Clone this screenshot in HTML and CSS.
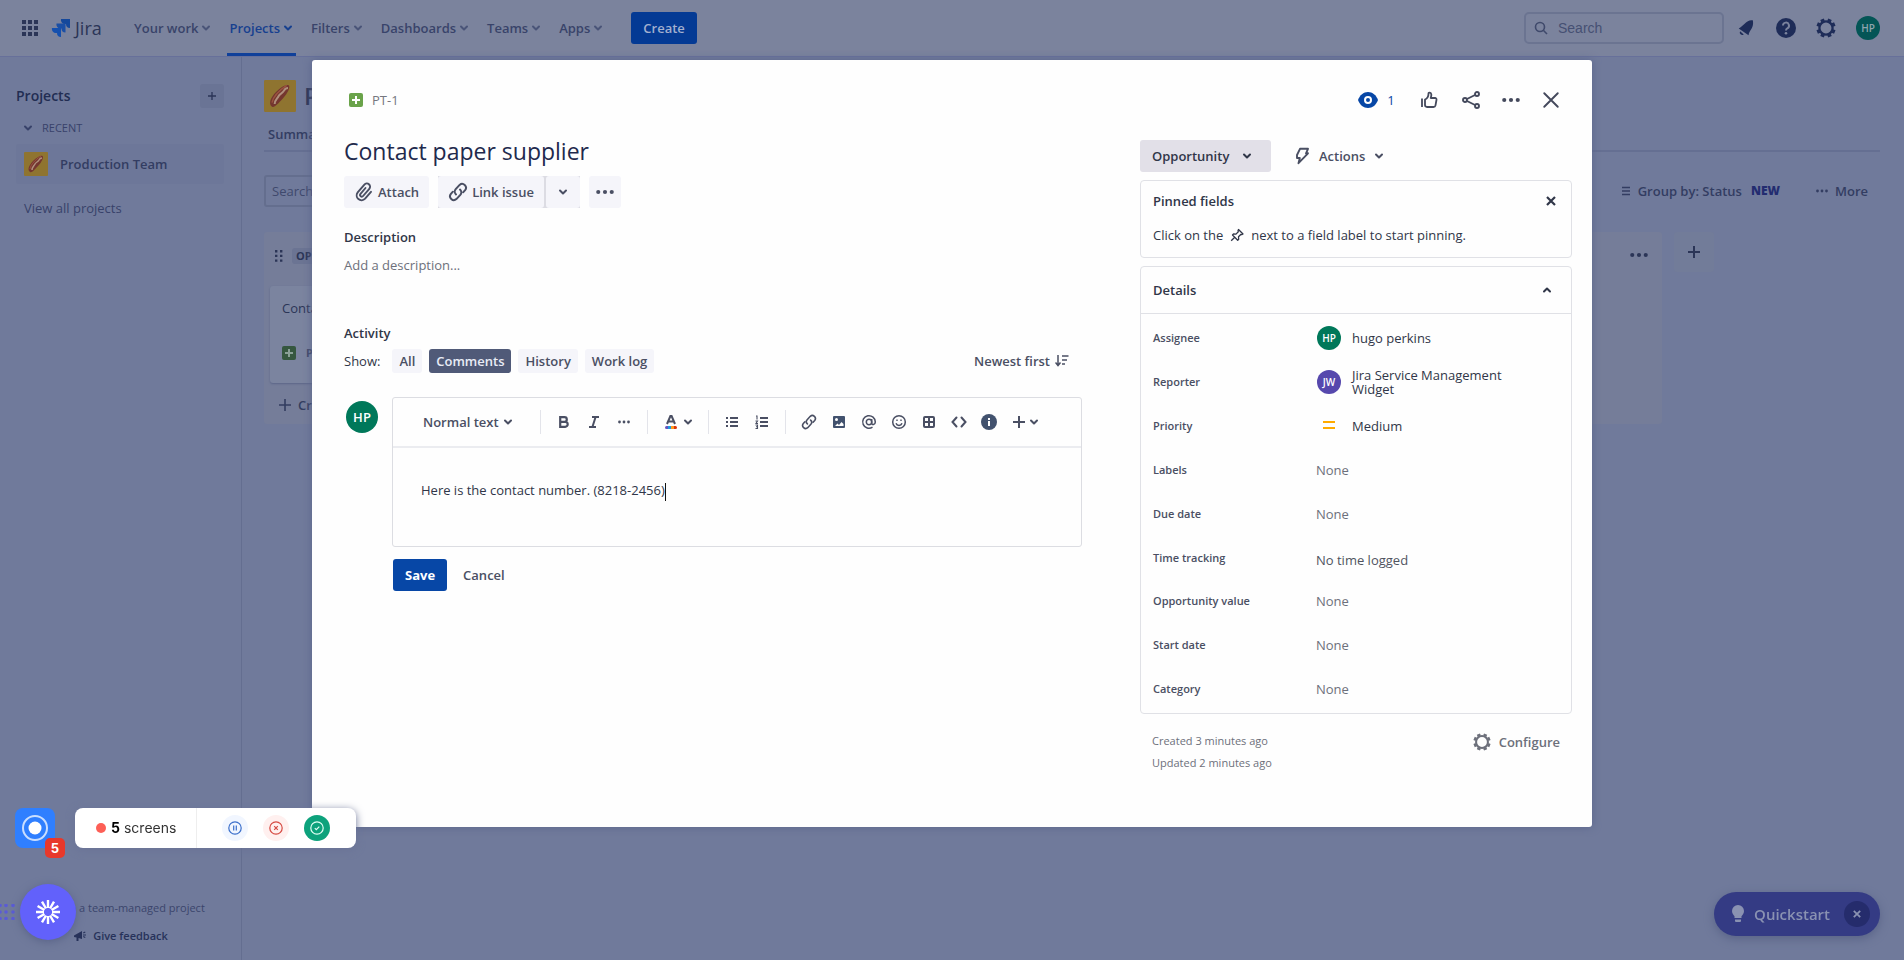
FILE: index.html
```
<!DOCTYPE html>
<html lang="en">
<head>
<meta charset="utf-8">
<title>Jira - Contact paper supplier</title>
<link rel="stylesheet" href="styles.css">
</head>
<body>
<svg class="sprite" aria-hidden="true">
  <symbol id="chev" viewBox="0 0 12 12"><path d="M3 4.500 6 7.500 9 4.500" fill="none" stroke="currentColor" stroke-width="2" stroke-linecap="round" stroke-linejoin="round"/></symbol>
  <symbol id="dots" viewBox="0 0 20 20"><g fill="currentColor"><circle cx="2.500" cy="10" r="2.300"/><circle cx="10" cy="10" r="2.300"/><circle cx="17.500" cy="10" r="2.300"/></g></symbol>
  <symbol id="plus" viewBox="0 0 12 12"><path d="M6 0v12M0 6h12" stroke="currentColor" stroke-width="2"/></symbol>
  <symbol id="cross" viewBox="0 0 16 16"><path d="M2 2 14 14M14 2 2 14" stroke="currentColor" stroke-width="1.700" stroke-linecap="round"/></symbol>
  <symbol id="crossbold" viewBox="0 0 10 10"><path d="M1 1 9 9M9 1 1 9" stroke="currentColor" stroke-width="2.200"/></symbol>
  <symbol id="story" viewBox="0 0 14 14"><rect width="14" height="14" rx="2" fill="currentColor"/><path d="M7 3v8M3 7h8" stroke="var(--plus, #fff)" stroke-width="2"/></symbol>
  <symbol id="gear" viewBox="0 0 20 20"><circle cx="10" cy="10" r="6.600" fill="none" stroke="currentColor" stroke-width="2.300"/><g stroke="currentColor" stroke-width="3.800"><path d="M7 3.600 6 1.200M13 3.600 14 1.200M16.400 7 18.800 6M16.400 13 18.800 14M13 16.400 14 18.800M7 16.400 6 18.800M3.600 13 1.200 14M3.600 7 1.200 6"/></g></symbol>
  <symbol id="link" viewBox="0 0 20 20"><g fill="none" stroke="currentColor" stroke-width="2" stroke-linecap="round"><path d="M8 12.400a3.800 3.800 0 0 1-.3-5.300l3.900-4.200a3.800 3.800 0 0 1 5.500 5.200l-2 2.200"/><path d="M12 7.600a3.800 3.800 0 0 1 .3 5.300l-3.900 4.200a3.800 3.800 0 0 1-5.500-5.200l2-2.200"/></g></symbol>
  <symbol id="hotdog" viewBox="0 0 24 24"><rect width="24" height="24" rx="1" fill="#8f7430"/><path d="M6 20C3 18 5 13 9 9s8-6 9.500-5-.5 6-4.500 10-6 7-8 6z" fill="#74362f"/><path d="M8 18c0-3 2-4 3-6s3-2 4-4 2-2 3-2" fill="none" stroke="#b08f7c" stroke-width="1.500"/><path d="M6 17c1-5 5-9 11-13" fill="none" stroke="#9b5440" stroke-width="1"/></symbol>
</svg>

<header class="topnav">
  <button class="plain" aria-label="Switch to"><svg class="i16" viewBox="0 0 16 16" fill="currentColor"><path d="M0 0h4v4H0zM6 0h4v4H6zM12 0h4v4h-4zM0 6h4v4H0zM6 6h4v4H6zM12 6h4v4h-4zM0 12h4v4H0zM6 12h4v4H6zM12 12h4v4h-4z"/></svg></button>
  <a class="brand" href="#"><svg class="i20" viewBox="0 0 20 20"><path d="M10 1h9v9a4 4 0 0 1-4-4h-1a4 4 0 0 1-4-5z" fill="#15489b"/><path d="M5.500 5.500h9v9a4 4 0 0 1-4-4h-1a4 4 0 0 1-4-5z" fill="#1b4fa5"/><path d="M1 10h9v9a4 4 0 0 1-4-4H5a4 4 0 0 1-4-5z" fill="#1550ae"/></svg><span>Jira</span></a>
  <nav class="menu">
    <a href="#">Your work<svg><use href="#chev"/></svg></a>
    <a href="#" class="active">Projects<svg><use href="#chev"/></svg></a>
    <a href="#">Filters<svg><use href="#chev"/></svg></a>
    <a href="#">Dashboards<svg><use href="#chev"/></svg></a>
    <a href="#">Teams<svg><use href="#chev"/></svg></a>
    <a href="#">Apps<svg><use href="#chev"/></svg></a>
  </nav>
  <button class="create">Create</button>
  <label class="navsearch"><svg class="i14" viewBox="0 0 14 14" fill="none" stroke="currentColor" stroke-width="1.600"><circle cx="6" cy="6" r="4.500"/><path d="m9.300 9.300 3.700 3.700"/></svg><input type="search" placeholder="Search" aria-label="Search"></label>
  <div class="tools">
    <button class="plain" aria-label="Notifications"><svg class="i20" viewBox="-1 -1 22 22" fill="currentColor"><path d="M2 10.500C5 9 7 6.500 10 4c3-2.300 5-2.500 7.500-2.500C18 4 18 7 16.500 10c-1.500 3-3.500 4.500-3.700 8z"/><path d="M3.500 13.500 7.500 17.200a2.800 2.800 0 0 1-4-3.700z"/></svg></button>
    <button class="plain" aria-label="Help"><svg class="i20" viewBox="0 0 20 20"><circle cx="10" cy="10" r="10" fill="currentColor"/><path d="M7 7.600a3 3 0 1 1 4.300 2.700c-1 .5-1.300 1-1.300 2.200" fill="none" stroke="#7b839d" stroke-width="2"/><circle cx="10" cy="15.300" r="1.300" fill="#7b839d"/></svg></button>
    <button class="plain" aria-label="Settings"><svg class="i20"><use href="#gear"/></svg></button>
    <button class="avatar dim" aria-label="Profile">HP</button>
  </div>
</header>

<div class="shell">
  <aside class="side">
    <div class="sidehead"><h2>Projects</h2><button aria-label="Create project"><svg class="i8"><use href="#plus"/></svg></button></div>
    <button class="recent"><svg class="i12"><use href="#chev"/></svg>RECENT</button>
    <a class="proj" href="#"><svg class="i24"><use href="#hotdog"/></svg>Production Team</a>
    <a class="all" href="#">View all projects</a>
    <div class="sidefoot">
      <p>You're in a team-managed project</p>
      <button><svg class="i12" viewBox="0 0 12 12" fill="currentColor"><path d="M0 5.500 8 1v8L4.500 8v3h-2V7.500L0 7zM9 4.500h3v1H9zM9 2.500l2-1 .5 1-2 1zM9 7l.5-1 2 1-.5 1z"/></svg>Give feedback</button>
    </div>
  </aside>

  <main class="board">
    <div class="boardtitle"><svg class="i32"><use href="#hotdog"/></svg><h1>Production Team</h1></div>
    <div class="tabs"><a href="#">Summary</a></div>
    <div class="filters">
      <input type="search" placeholder="Search board" aria-label="Search board">
      <button><svg class="i10" viewBox="0 0 10 10" stroke="currentColor" stroke-width="1.400"><path d="M1 1.500h8M1 5h8M1 8.500h8"/></svg>Group by: Status<b>NEW</b></button>
      <button><svg class="i12"><use href="#dots"/></svg>More</button>
    </div>
    <div class="cols">
      <section class="col">
        <div class="colhead"><svg class="grip" viewBox="0 0 8 12" fill="currentColor"><path d="M0 0h2.400v2.400H0zM5 0h2.400v2.400H5zM0 4.700h2.400v2.400H0zM5 4.700h2.400v2.400H5zM0 9.400h2.400v2.400H0zM5 9.400h2.400v2.400H5z"/></svg><span>OPPORTUNITY</span></div>
        <article class="card"><p>Contact paper supplier</p><div><svg class="i14"><use href="#story"/></svg><b>PT-1</b></div></article>
        <button class="add"><svg class="i12" viewBox="0 0 12 12"><path d="M6 0v12M0 6h12" stroke="currentColor" stroke-width="1.600"/></svg>Create issue</button>
      </section>
      <section class="col"></section>
      <section class="col"></section>
      <section class="col"></section>
      <section class="col last"><button class="plain" aria-label="Column actions"><svg class="i18"><use href="#dots"/></svg></button></section>
      <button class="addcol" aria-label="Add column"><svg class="i12"><use href="#plus"/></svg></button>
    </div>
  </main>
</div>

<button class="quick"><svg viewBox="0 0 14 18" fill="currentColor"><path d="M7 0a6 6 0 0 1 6 6c0 2.500-1.500 3.800-2.500 5.300V13h-7v-1.700C2.500 9.800 1 8.500 1 6a6 6 0 0 1 6-6zM4 14.500h6V16a1 1 0 0 1-1 1H5a1 1 0 0 1-1-1z"/></svg>Quickstart<span><svg class="i8"><use href="#crossbold"/></svg></span></button>

<div class="modal" role="dialog" aria-label="Contact paper supplier">
  <header class="mhead">
    <a href="#" class="key"><svg class="i14"><use href="#story"/></svg>PT-1</a>
    <div class="acts">
      <button class="watch"><svg class="i20" viewBox="0 0 20 20"><path d="M0 10c1.800-5 5.500-8 10-8s8.200 3 10 8c-1.800 5-5.500 8-10 8S1.800 15 0 10z" fill="currentColor"/><circle cx="10" cy="10" r="3" fill="none" stroke="#fff" stroke-width="2"/></svg>1</button>
      <button class="vote" aria-label="Vote"><svg class="i18" viewBox="0 0 18 18" fill="none" stroke="currentColor" stroke-width="1.800" stroke-linejoin="round"><path d="M2 7.500V16"/><path d="M5 8.500c2.500-1 3.500-3.500 3.500-6 0-1.200 2.500-1.200 2.800.8.200 1.500-.3 2.500-.6 3.700H15c1 0 1.700.8 1.500 1.800l-1 5.500c-.2 1-.9 1.700-2 1.700H7c-1.300 0-2-.7-2-2z"/></svg></button>
      <button aria-label="Share"><svg class="i18" viewBox="0 0 18 18" fill="none" stroke="currentColor" stroke-width="1.900"><circle cx="3" cy="9" r="2"/><circle cx="15" cy="3" r="2"/><circle cx="15" cy="15" r="2"/><path d="m5 8 8-4M5 10l8 4"/></svg></button>
      <button aria-label="Actions"><svg class="i18"><use href="#dots"/></svg></button>
      <button aria-label="Close"><svg class="i18"><use href="#cross"/></svg></button>
    </div>
  </header>

  <div class="mbody">
    <div class="content">
      <h1>Contact paper supplier</h1>
      <div class="btns">
        <button><svg class="i20" viewBox="0 0 20 20" fill="none" stroke="currentColor" stroke-width="1.900" stroke-linecap="round"><path d="m11.500 6-5 5.800a1.700 1.700 0 0 0 2.600 2.200l6.200-7.200a3.200 3.200 0 0 0-4.900-4.200L3.700 10.300a4.900 4.900 0 0 0 7.400 6.400l5.900-6.900"/></svg>Attach</button>
        <div class="split"><button><svg class="i20"><use href="#link"/></svg>Link issue</button><button aria-label="More link options"><svg class="i12"><use href="#chev"/></svg></button></div>
        <button class="square" aria-label="More"><svg class="i18"><use href="#dots"/></svg></button>
      </div>
      <h2>Description</h2>
      <p class="placeholder">Add a description...</p>
      <h2 class="activity">Activity</h2>
      <div class="show">
        <span>Show:</span>
        <button>All</button><button class="on">Comments</button><button>History</button><button>Work log</button>
        <button class="sort">Newest first<svg class="i14" viewBox="0 0 14 14" fill="none" stroke="currentColor" stroke-width="1.500"><path d="M3 1v10M.5 8.500 3 11.500l2.500-3M7 2h6.500M7 6h5M7 10h3"/></svg></button>
      </div>
      <div class="comment">
        <span class="avatar big">HP</span>
        <div>
          <div class="editor">
            <div class="toolbar">
              <label class="pick style"><select aria-label="Text style"><option>Normal text</option></select><svg class="i12"><use href="#chev"/></svg></label>
              <i></i>
              <button aria-label="Bold"><svg class="i16" viewBox="0 0 16 16" fill="none" stroke="currentColor" stroke-width="2.200"><path d="M4.200 3.200h4.300a2.300 2.300 0 0 1 0 4.600H4.200zM4.200 7.800h5a2.500 2.500 0 0 1 0 5h-5z"/></svg></button>
              <button aria-label="Italic"><svg class="i16" viewBox="0 0 16 16" fill="none" stroke="currentColor" stroke-width="2"><path d="M6 3h7M3 13h7M9.600 3 6.400 13"/></svg></button>
              <button aria-label="More formatting"><svg class="i12"><use href="#dots"/></svg></button>
              <i></i>
              <button aria-label="Text color" class="wide"><svg class="i16" viewBox="0 0 16 16"><path d="M4 10 7.400 2h1.200L12 10M5.500 7.500h5" fill="none" stroke="currentColor" stroke-width="2"/><path d="M3.500 12H5v3H3.500a1.500 1.500 0 0 1 0-3z" fill="#6554c0"/><path d="M5 12h3v3H5z" fill="#1d9ce0"/><path d="M8 12h3v3H8z" fill="#ff991f"/><path d="M11 12h1.500a1.500 1.500 0 0 1 0 3H11z" fill="#de350b"/></svg><svg class="i12"><use href="#chev"/></svg></button>
              <i></i>
              <button aria-label="Bullet list"><svg class="i16" viewBox="0 0 16 16" stroke="currentColor" stroke-width="2"><path d="M2 4h2M2 8h2M2 12h2M6 4h8M6 8h8M6 12h8"/></svg></button>
              <button aria-label="Numbered list"><svg class="i16" viewBox="0 0 16 16" fill="none" stroke="currentColor"><path stroke-width="2" d="M6 4h8M6 8h8M6 12h8"/><path d="M2 2h1v3.500M1.500 7h2L2 9.500h2M1.500 11h2v3.500h-2M2 12.700h1.500" stroke-width="1.100"/></svg></button>
              <i></i>
              <button aria-label="Link"><svg class="i16"><use href="#link"/></svg></button>
              <button aria-label="Image"><svg class="i16" viewBox="0 0 16 16"><rect x="2" y="2" width="12" height="12" rx="1" fill="#42526e"/><circle cx="5.500" cy="5.500" r="1.500" fill="#fff"/><path d="m4 12 2.500-2.500L8 11l2.500-3L12.500 10v2z" fill="#fff"/></svg></button>
              <button aria-label="Mention"><svg class="i16" viewBox="0 0 16 16" fill="none" stroke="currentColor" stroke-width="1.500"><circle cx="8" cy="8" r="2.700"/><path d="M10.700 5v4.200c0 2.200 3.600 1.800 3.600-1.200a6.300 6.300 0 1 0-2.800 5.200"/></svg></button>
              <button aria-label="Emoji"><svg class="i16" viewBox="0 0 16 16" fill="none" stroke="currentColor" stroke-width="1.500"><circle cx="8" cy="8" r="6.300"/><path d="M5 9.300a3.200 3.200 0 0 0 6 0M5.300 6.200h1.400M9.300 6.200h1.400"/></svg></button>
              <button aria-label="Table"><svg class="i16" viewBox="0 0 16 16" fill="none" stroke="currentColor" stroke-width="2"><rect x="3" y="3" width="10" height="10" rx="1"/><path d="M8 3v10M3 8h10"/></svg></button>
              <button aria-label="Code"><svg class="i16" viewBox="0 0 16 16" fill="none" stroke="currentColor" stroke-width="2" stroke-linecap="round"><path d="M5.500 3.500 1.500 8l4 4.500M10.500 3.500l4 4.500-4 4.500"/></svg></button>
              <button aria-label="Info panel"><svg class="i16" viewBox="0 0 16 16"><circle cx="8" cy="8" r="8" fill="#42526e"/><path d="M7 7h2v5H7zM7 4h2v2H7z" fill="#fff"/></svg></button>
              <button aria-label="Insert" class="wide"><svg class="i12"><use href="#plus"/></svg><svg class="i12"><use href="#chev"/></svg></button>
            </div>
            <div class="text" role="textbox" aria-label="Comment" contenteditable="true">Here is the contact number. (8218-2456)<span class="caret"></span></div>
          </div>
          <div class="submit"><button class="save">Save</button><button>Cancel</button></div>
        </div>
      </div>
    </div>

    <div class="info">
      <div class="status">
        <label class="pick state"><select aria-label="Status"><option>Opportunity</option></select><svg class="i12"><use href="#chev"/></svg></label>
        <button><svg class="i18" viewBox="0 0 18 18" fill="none" stroke="currentColor" stroke-width="1.900" stroke-linejoin="round"><path d="M7 1.800h8L13 6.300h2L5.500 16.200 6.800 11H4V8z"/></svg>Actions<svg class="i12"><use href="#chev"/></svg></button>
      </div>
      <section class="box pinned">
        <div><h2>Pinned fields</h2><button aria-label="Dismiss"><svg class="i10"><use href="#crossbold"/></svg></button></div>
        <p>Click on the <svg class="i14" viewBox="0 0 14 14" fill="none" stroke="currentColor" stroke-width="1.300" stroke-linejoin="round"><path d="m8.500 1.500 4.500 4.500-1.300.7-.9-.2-2.300 2.300.2 2.400-1 1-5.200-5.200 1-1 2.500.1 2.300-2.300-.3-1.100zM5 9l-3.800 3.800"/></svg> next to a field label to start pinning.</p>
      </section>
      <section class="box details">
        <div><h2>Details</h2><button aria-label="Collapse"><svg class="i12 up"><use href="#chev"/></svg></button></div>
        <dl>
          <dt>Assignee</dt><dd class="who"><span class="avatar">HP</span>hugo perkins</dd>
          <dt>Reporter</dt><dd class="who"><span class="avatar jw">JW</span>Jira Service Management Widget</dd>
          <dt>Priority</dt><dd class="who"><svg class="i24" viewBox="0 0 24 24" stroke="#ffab00" stroke-width="2"><path d="M6 8h12M6 14h12"/></svg>Medium</dd>
          <dt>Labels</dt><dd class="none">None</dd>
          <dt>Due date</dt><dd class="none">None</dd>
          <dt>Time tracking</dt><dd class="time">No time logged</dd>
          <dt>Opportunity value</dt><dd class="none">None</dd>
          <dt>Start date</dt><dd class="none">None</dd>
          <dt>Category</dt><dd class="none">None</dd>
        </dl>
      </section>
      <footer>
        <div><p>Created 3 minutes ago</p><p>Updated 2 minutes ago</p></div>
        <button><svg class="i18"><use href="#gear"/></svg>Configure</button>
      </footer>
    </div>
  </div>
</div>

<button class="rec" aria-label="Recorder"><svg viewBox="0 0 40 40"><rect width="40" height="40" rx="8" fill="#2f7fff"/><circle cx="20" cy="20" r="12" fill="none" stroke="#c9deff" stroke-width="2"/><circle cx="20" cy="20" r="6.500" fill="#fff"/></svg><b>5</b></button>
<div class="recbar">
  <div class="count"><i></i><b>5</b>screens</div>
  <div class="controls">
    <button class="pause" aria-label="Pause"><svg class="i14" viewBox="0 0 14 14" fill="none" stroke="currentColor" stroke-width="1.200"><circle cx="7" cy="7" r="6.200"/><path d="M5.700 4.500v5M8.300 4.500v5"/></svg></button>
    <button class="stop" aria-label="Discard"><svg class="i14" viewBox="0 0 14 14" fill="none" stroke="currentColor" stroke-width="1.200"><circle cx="7" cy="7" r="6.200"/><path d="m5.200 5.200 3.600 3.600M8.800 5.200 5.200 8.800"/></svg></button>
    <button class="done" aria-label="Finish"><svg class="i14" viewBox="0 0 14 14" fill="none" stroke="currentColor" stroke-width="1.200"><circle cx="7" cy="7" r="6.200"/><path d="m4.800 7.200 1.500 1.500 3-3"/></svg></button>
  </div>
</div>
<div class="helper">
  <svg class="handle" viewBox="0 0 16 16" fill="#5a5bd6"><circle cx="0" cy="1.500" r="1.800"/><circle cx="6" cy="1.500" r="1.800"/><circle cx="13" cy="1.500" r="1.800"/><circle cx="0" cy="8" r="1.800"/><circle cx="6" cy="8" r="1.800"/><circle cx="13" cy="8" r="1.800"/><circle cx="0" cy="14.500" r="1.800"/><circle cx="6" cy="14.500" r="1.800"/><circle cx="13" cy="14.500" r="1.800"/></svg>
  <button aria-label="Assistant"><svg class="i24" viewBox="0 0 24 24" stroke="#fff" stroke-width="2.400"><path d="M12 0v8M12 16v8M0 12h8M16 12h8M6 1.600l4 6.900M14 15.500l4 6.900M18 1.600l-4 6.900M10 15.500l-4 6.900M1.600 6l6.900 4M15.500 14l6.900 4M1.600 18l6.900-4M15.500 10l6.900-4"/></svg></button>
</div>
</body>
</html>
```
FILE: styles.css
```
* { box-sizing: border-box; }
body {
  margin: 0;
  min-height: 100vh;
  display: flex;
  flex-direction: column;
  overflow: hidden;
  background: #707a9b;
  color: #2b3557;
  font: 13px/20px "Open Sans", "Noto Sans", sans-serif;
}
h1, h2, p, dl, dd { margin: 0; }
h2 { font-size: 13px; line-height: 20px; font-weight: 600; }
a { color: inherit; text-decoration: none; }
button, input, select { font: inherit; color: inherit; border: 0; margin: 0; padding: 0; background: none; }
button { display: flex; align-items: center; justify-content: center; font-weight: 600; }
svg { display: block; flex: none; }
.sprite { display: none; }
.i8 { width: 8px; height: 8px; }
.i10 { width: 10px; height: 10px; }
.i12 { width: 12px; height: 12px; }
.i14 { width: 14px; height: 14px; }
.i16 { width: 16px; height: 16px; }
.i18 { width: 18px; height: 18px; }
.i20 { width: 20px; height: 20px; }
.i24 { width: 24px; height: 24px; }
.i32 { width: 32px; height: 32px; }
.avatar {
  display: inline-flex; align-items: center; justify-content: center; flex: none;
  width: 24px; height: 24px; border-radius: 50%;
  background: #00785a; color: #fff; font-size: 10px; font-weight: 600;
}
.avatar.dim { background: #045556; color: #8fa5ae; }
.avatar.big { width: 32px; height: 32px; font-size: 13px; }
.avatar.jw { background: #5648ad; }

/* top navigation */
.topnav {
  display: flex; align-items: center;
  height: 57px; padding: 0 24px 0 22px;
  background: #7b839d; border-bottom: 1px solid #67709a;
}
.brand { display: flex; align-items: center; gap: 4px; margin-left: 13px; font-size: 18px; width: 81px; }
.menu { display: flex; align-self: stretch; gap: 13px; }
.menu a { display: flex; align-items: center; gap: 2px; padding: 3px 2px 0; border-bottom: 3px solid transparent; font-weight: 600; color: #39436a; }
.menu svg { width: 12px; height: 12px; color: #4a5478; }
.menu .active { color: #17408f; border-color: #10409a; }
.menu .active svg { color: #17408f; }
.create { margin-left: 25px; height: 32px; padding: 0 12px; border-radius: 3px; background: #043a94; color: #a3b0cf; }
.navsearch {
  display: flex; align-items: center; gap: 10px;
  width: 200px; height: 32px; margin-left: auto; padding: 0 8px;
  border: 2px solid #6b7491; border-radius: 5px; color: #3f496b;
}
.navsearch input { width: 100%; font: 14px "Liberation Sans", sans-serif; outline: 0; }
.navsearch input::placeholder { color: #465073; opacity: 1; }
.tools { display: flex; align-items: center; gap: 20px; margin-left: 12px; color: #1e2c58; }

/* sidebar */
.shell { display: flex; flex: 1; }
.side { display: flex; flex-direction: column; width: 242px; padding: 27px 17px 14px 16px; border-right: 1px solid #646e90; }
.sidehead { display: flex; align-items: center; justify-content: space-between; }
.sidehead h2 { font-size: 14px; line-height: 24px; color: #222d53; }
.sidehead button { width: 24px; height: 24px; background: #6a7495; border-radius: 3px; }
.recent { justify-content: flex-start; gap: 8px; margin-top: 10px; padding-left: 6px; font-size: 11px; font-weight: 500; line-height: 20px; color: #38426a; }
.proj { display: flex; align-items: center; gap: 12px; height: 40px; margin-top: 6px; padding-left: 8px; background: #6d7799; border-radius: 3px; font-weight: 600; color: #333d62; }
.all { margin: 14px 8px; color: #38426a; }
.sidefoot { margin-top: auto; padding-right: 4px; text-align: center; font-size: 11px; color: #3b456c; }
.sidefoot button { width: 100%; gap: 7px; margin-top: 8px; padding-left: 6px; color: #27325a; }

/* board behind the dialog */
.board { flex: 1; padding: 23px 24px 0 22px; }
.boardtitle { display: flex; align-items: center; gap: 8px; }
.boardtitle h1 { font-size: 24px; line-height: 32px; font-weight: 600; }
.tabs { height: 40px; padding: 12px 4px 0; border-bottom: 2px solid #656f92; font-weight: 600; color: #333d62; }
.filters { display: flex; align-items: center; gap: 36px; margin-top: 23px; padding-right: 12px; color: #333d62; }
.filters input { width: 160px; height: 32px; padding: 0 6px; margin-right: auto; border: 2px solid #646e8e; border-radius: 3px; }
.filters input::placeholder { color: #3f496d; opacity: 1; }
.filters button { gap: 7px; }
.filters b { margin-left: 2px; font-size: 12px; color: #232c70; }
.cols { display: flex; gap: 12px; align-items: flex-start; margin-top: 25px; }
.col { flex: 0 1 270px; height: 192px; background: #757d99; padding: 6px; border-radius: 3px; }
.col.last { display: flex; justify-content: flex-end; align-items: flex-start; padding: 14px; }
.addcol { width: 40px; height: 40px; background: #727c99; border-radius: 3px; }
.colhead { display: flex; align-items: center; gap: 9px; height: 36px; padding-left: 5px; }
.grip { width: 8px; height: 12px; }
.colhead span { padding: 0 4px; background: #6b7493; font-size: 11px; line-height: 16px; font-weight: 700; border-radius: 3px; }
.card { margin-top: 12px; height: 97px; padding: 12px; background: #7b849f; border-radius: 3px; box-shadow: 0 1px 2px #5b6588; }
.card div { display: flex; align-items: center; gap: 10px; margin-top: 25px; color: #35573f; --plus: #8aa097; }
.card b { font-size: 11px; color: #3f4969; }
.add { gap: 7px; padding: 12px 9px; color: #333d60; }

.quick {
  position: fixed; right: 24px; bottom: 24px; height: 44px; padding: 0 10px 0 17px; gap: 9px;
  border-radius: 22px; background: #343b84; color: #8a92b2; font-size: 15px; box-shadow: 0 3px 10px #5a6488;
}
.quick > svg { width: 14px; height: 18px; }
.quick span { display: flex; align-items: center; justify-content: center; width: 26px; height: 26px; margin-left: 5px; border-radius: 50%; background: #252c6c; }

/* issue dialog */
.modal {
  position: absolute; top: 60px; left: 50%; margin-left: -640px; width: 1280px; min-height: 767px;
  padding: 24px 20px 40px 32px; background: #fefefe; border-radius: 3px; box-shadow: 0 0 8px #5b658c; color: #303648;
}
.mhead { display: flex; align-items: center; justify-content: space-between; height: 32px; padding-left: 5px; color: #44495c; }
.key { display: flex; align-items: center; gap: 9px; color: #75777f; }
.key svg { color: #6aa34a; }
.acts { display: flex; gap: 8px; padding-right: 5px; }
.acts button { width: 32px; height: 32px; }
.acts .watch { width: 51px; gap: 9px; color: #0747a6; font-weight: 400; margin-right: 3px; }
.acts .vote { margin-right: 2px; }
.mbody { display: grid; grid-template-columns: minmax(0, 1fr) 432px; gap: 58px; margin-top: 24px; }
.content h1 { margin-top: -5px; font-size: 23px; line-height: 32px; font-weight: 500; color: #1f2a4d; }
.btns { display: flex; gap: 9px; margin-top: 9px; color: #4a4f63; }
.btns button { height: 32px; padding: 0 10px; gap: 4px; background: #f5f5fa; border-radius: 3px; }
.btns .square { width: 32px; padding: 0; }
.split { display: flex; gap: 2px; background: #dcdce3; }
.split button:last-child { padding: 0 11px; }
.content h2 { margin-top: 19px; }
.placeholder { margin-top: 8px; color: #6d707b; }
.content .activity { margin-top: 48px; }
.show { display: flex; align-items: center; gap: 7px; margin-top: 6px; }
.show span { margin-right: 5px; }
.show button { height: 24px; padding: 0 7px; background: #f5f5fa; border-radius: 3px; color: #4a4f63; }
.show .on { background: #505a78; color: #e8ecf6; }
.show .sort { margin-left: auto; padding-right: 13px; gap: 5px; background: none; }
.comment { display: grid; grid-template-columns: 32px minmax(0, 1fr); gap: 14px; margin: 24px 0 0 2px; }
.comment .avatar { margin-top: 4px; }
.editor { border: 1px solid #dcdde2; border-radius: 3px; }
.toolbar { display: flex; align-items: center; height: 50px; padding-left: 21px; border-bottom: 2px solid #ebecf0; color: #4a4f63; }
.toolbar button { width: 30px; height: 32px; }
.toolbar .wide { width: 44px; gap: 3px; }
.toolbar i { width: 1px; height: 24px; margin: 0 8px; background: #e3e4ea; }
.pick { display: grid; align-items: center; font-weight: 600; }
.pick select, .pick svg { grid-area: 1 / 1; }
.pick select { appearance: none; font-weight: 600; height: 32px; width: 100%; outline: 0; }
.pick svg { justify-self: end; pointer-events: none; }
.style { width: 118px; padding: 0 18px 0 9px; }
.text { min-height: 98px; padding: 32px 28px; outline: 0; }
.caret { display: inline-block; width: 1px; height: 18px; background: #111; vertical-align: middle; }
.submit { display: flex; gap: 4px; margin-top: 12px; padding-left: 1px; }
.submit button { height: 32px; padding: 0 12px; border-radius: 3px; color: #4a4f63; }
.submit .save { background: #0747a6; color: #fff; font-weight: 700; }

.status { display: flex; gap: 22px; }
.state { width: 131px; height: 32px; padding: 0 18px 0 12px; background: #e2e0e8; border-radius: 3px; }
.status button { height: 32px; gap: 8px; color: #4a4f63; }
.box { margin-top: 8px; border: 1px solid #e0e1e6; border-radius: 4px; }
.box > div { display: flex; align-items: center; justify-content: space-between; padding: 0 15px 0 12px; }
.pinned { padding: 10px 0 12px; }
.pinned p { display: flex; gap: 7px; align-items: center; margin: 14px 12px 0; white-space: nowrap; }
.details > div { height: 47px; padding-right: 18px; border-bottom: 1px solid #e0e1e6; }
.up { transform: rotate(180deg); }
dl { display: grid; grid-template-columns: 163px minmax(0, 1fr); grid-template-rows: repeat(5, 44px) 43px; grid-auto-rows: 44px; align-items: center; padding: 2px 24px 2px 12px; }
dt { font-size: 11px; font-weight: 600; color: #4a4f63; }
.who { display: flex; align-items: center; gap: 11px; padding: 0 24px 0 1px; line-height: 14px; }
.none { color: #6d707b; }
.time { padding-top: 4px; color: #50545f; }
.info footer { display: flex; justify-content: space-between; align-items: flex-start; padding: 16px 12px 0; color: #6d707b; font-size: 11px; }
.info footer p { line-height: 22px; }
.info footer button { gap: 8px; height: 24px; font-size: 13px; }

/* floating recorder and assistant */
.rec { position: fixed; left: 15px; bottom: 112px; }
.rec svg { width: 40px; height: 40px; }
.rec b { position: absolute; left: 30px; top: 30px; width: 20px; border-radius: 5px; background: #e8382b; color: #fff; font: 700 13px/20px Inter, sans-serif; }
.recbar {
  position: fixed; left: 75px; bottom: 112px; display: flex; height: 40px; border-radius: 8px;
  background: #fff; box-shadow: 0 2px 8px #6a7396; font: 14px/20px Inter, sans-serif; color: #333;
}
.count { display: flex; align-items: center; gap: 4px; width: 122px; padding-left: 21px; border-right: 1px solid #eee; }
.count i { width: 10px; height: 10px; margin-right: 1px; border-radius: 50%; background: #fd5f56; }
.count b { color: #000; }
.controls { display: flex; align-items: center; gap: 15px; padding: 0 26px 0 25px; }
.controls button { width: 26px; height: 26px; border-radius: 50%; }
.pause { background: #f1f6ff; color: #3b6fcb; }
.stop { background: #fff0ef; color: #d64a42; }
.done { background: #0da27c; color: #e2fff5; }
.helper { position: fixed; left: 0; bottom: 20px; display: flex; align-items: center; gap: 4px; }
.handle { width: 16px; height: 16px; }
.helper button { width: 56px; height: 56px; border-radius: 50%; background: #6261fb; box-shadow: 0 2px 8px #5a6488; }
```
